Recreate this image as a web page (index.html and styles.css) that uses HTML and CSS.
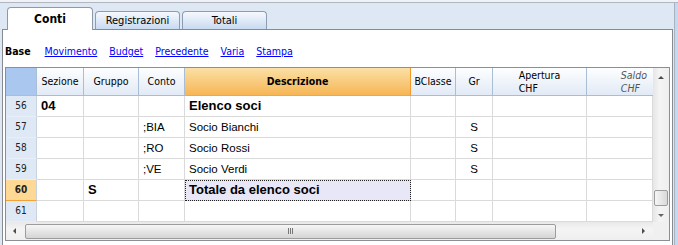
FILE: index.html
```html
<!DOCTYPE html>
<html lang="it">
<head>
    <meta charset="UTF-8">
    <title>Conti</title>
    <link rel="stylesheet" href="styles.css">
</head>
<body>
    <div class="app">
        <div class="main">
            <div class="tabs">
                <div class="tab tab--active">Conti</div>
                <div class="tab">Registrazioni</div>
                <div class="tab">Totali</div>
            </div>
            <section class="panel">
                <nav class="views">
                    <span class="views__current">Base</span>
                    <a href="#">Movimento</a>
                    <a href="#">Budget</a>
                    <a href="#">Precedente</a>
                    <a href="#">Varia</a>
                    <a href="#">Stampa</a>
                </nav>
                <div class="grid">
                    <div class="grid__main">
                        <div class="table">
                            <div class="row row--head">
                                <div class="cell cell--num"></div>
                                <div class="cell">Sezione</div>
                                <div class="cell">Gruppo</div>
                                <div class="cell">Conto</div>
                                <div class="cell cell--sel">Descrizione</div>
                                <div class="cell">BClasse</div>
                                <div class="cell">Gr</div>
                                <div class="cell">Apertura<br>CHF</div>
                                <div class="cell cell--calc">Saldo<br>CHF</div>
                            </div>
                            <div class="row">
                                <div class="cell cell--num">56</div>
                                <div class="cell cell--bold">04</div>
                                <div class="cell"></div>
                                <div class="cell"></div>
                                <div class="cell cell--bold">Elenco soci</div>
                                <div class="cell"></div>
                                <div class="cell"></div>
                                <div class="cell"></div>
                                <div class="cell"></div>
                            </div>
                            <div class="row">
                                <div class="cell cell--num">57</div>
                                <div class="cell"></div>
                                <div class="cell"></div>
                                <div class="cell">;BIA</div>
                                <div class="cell">Socio Bianchi</div>
                                <div class="cell"></div>
                                <div class="cell cell--center">S</div>
                                <div class="cell"></div>
                                <div class="cell"></div>
                            </div>
                            <div class="row">
                                <div class="cell cell--num">58</div>
                                <div class="cell"></div>
                                <div class="cell"></div>
                                <div class="cell">;RO</div>
                                <div class="cell">Socio Rossi</div>
                                <div class="cell"></div>
                                <div class="cell cell--center">S</div>
                                <div class="cell"></div>
                                <div class="cell"></div>
                            </div>
                            <div class="row">
                                <div class="cell cell--num">59</div>
                                <div class="cell"></div>
                                <div class="cell"></div>
                                <div class="cell">;VE</div>
                                <div class="cell">Socio Verdi</div>
                                <div class="cell"></div>
                                <div class="cell cell--center">S</div>
                                <div class="cell"></div>
                                <div class="cell"></div>
                            </div>
                            <div class="row row--current">
                                <div class="cell cell--num">60</div>
                                <div class="cell"></div>
                                <div class="cell cell--bold">S</div>
                                <div class="cell"></div>
                                <div class="cell cell--bold cell--focus">Totale da elenco soci</div>
                                <div class="cell"></div>
                                <div class="cell"></div>
                                <div class="cell"></div>
                                <div class="cell"></div>
                            </div>
                            <div class="row">
                                <div class="cell cell--num">61</div>
                                <div class="cell"></div>
                                <div class="cell"></div>
                                <div class="cell"></div>
                                <div class="cell"></div>
                                <div class="cell"></div>
                                <div class="cell"></div>
                                <div class="cell"></div>
                                <div class="cell"></div>
                            </div>
                        </div>
                        <div class="vscroll">
                            <span class="arrow arrow--up"></span>
                            <span class="vscroll__thumb"></span>
                            <span class="arrow arrow--down"></span>
                        </div>
                    </div>
                    <div class="hscroll">
                        <span class="arrow arrow--left"></span>
                        <span class="hscroll__thumb"><span class="grip"></span></span>
                        <span class="arrow arrow--right"></span>
                        <span class="corner"></span>
                    </div>
                </div>
            </section>
        </div>
        <div class="edge"></div>
    </div>
</body>
</html>
```

FILE: styles.css
```css
* { margin: 0; padding: 0; box-sizing: border-box; }
body {
    background: #eef3f9;
    font-family: "Liberation Sans", Arial, sans-serif;
    color: #000;
    overflow: hidden;
}
.app {
    display: flex;
    height: 243px;
    margin-top: 2px;
    border-top: 1px solid #b3b7bd;
    background: #dde8f4;
}
.main{
    width: 674px;
}
.edge{
    flex: 1;
    border-left: 1px solid #a9b3c0;
    background: #c4d8f1;
}

/* tabs */
.tabs{
    display: flex;
    align-items: flex-end;
    height: 27px;
    margin-bottom: -1px;
    padding-left: 7px;
    position: relative;
    z-index: 1;
}
.tab{
    width: 85px;
    height: 18px;
    margin-left: 2px;
    margin-bottom: 1px;
    padding-top: 2px;
    border: 1px solid #8e9cb1;
    border-bottom: none;
    border-radius: 4px 4px 0 0;
    background: linear-gradient(#f6f9fd, #c8daf1);
    font-family: "DejaVu Sans Condensed", "Liberation Sans", sans-serif;
    font-size: 11px;
    line-height: 14px;
    text-align: center;
}
.tab--active{
    width: 86px;
    height: 23px;
    margin-left: 0;
    margin-bottom: 0;
    padding-top: 4px;
    border-color: #8d99aa;
    background: #fff;
    font-weight: bold;
    font-size: 12px;
}

/* panel */
.panel{
    width: 671px;
    height: 216px;
    margin-left: 2px;
    border: 1px solid #878b90;
    border-bottom: none;
    background: #fff;
}
.views{
    display: flex;
    align-items: center;
    gap: 12px;
    height: 16px;
    margin: 13px 0 8px;
    padding-left: 2px;
    font-family: "DejaVu Sans Condensed", "Liberation Sans", sans-serif;
    font-size: 10.5px;
}
.views a{
    color: #0000ff;
    text-decoration: underline;
}
.views__current{
    font-weight: bold;
    margin-right: 2px;
}

/* grid */
.grid{
    margin: 0 2px;
    border: 1px solid #8b8f94;
}
.grid__main{
    display: flex;
}
.table{
    width: 647px;
}
.row{
    display: grid;
    grid-template-columns: 31px 47px 55px 46px 226px 45px 37px 94px 66px;
    height: 21px;
}
.cell{
    border-right: 1px solid #dadada;
    border-bottom: 1px solid #dadada;
    padding: 0 4px;
    font-size: 11.5px;
    line-height: 20px;
    white-space: nowrap;
    overflow: hidden;
}
.cell--bold{
    font-weight: bold;
    font-size: 13px;
}
.cell--center{
    text-align: center;
}
.cell--num{
    background: #dfe9f6;
    border-bottom-color: #e8eef7;
    border-right-color: #c9d3df;
    padding: 0;
    text-align: center;
    font-family: "DejaVu Sans Condensed", "Liberation Sans", sans-serif;
    font-size: 10px;
    color: #222;
}
.cell--focus{
    background: #e7e7f7;
    outline: 1px dotted #222;
    outline-offset: -1px;
}
.row--current .cell--num{
    background: #fdd995;
    border-bottom: 1px solid #f3a236;
    font-weight: bold;
}

.row--head{
    height: 28px;
}
.row--head .cell{
    display: flex;
    flex-direction: column;
    justify-content: center;
    align-items: center;
    padding: 0 3px;
    border-right-color: #a9bdd5;
    border-bottom-color: #a9bdd5;
    background: linear-gradient(#fdfeff, #e2eaf6);
    font-family: "DejaVu Sans Condensed", "Liberation Sans", sans-serif;
    font-size: 10.5px;
    line-height: 13px;
}
.row--head .cell--num{
    background: #aac8ef;
}
.row--head .cell--sel{
    background: linear-gradient(#fbe0a6, #f6b655);
    border-right-color: #f19a2c;
    border-bottom-color: #f0a844;
    font-weight: bold;
}
.row--head .cell--calc{
    align-items: flex-end;
    padding-right: 6px;
    font-style: italic;
    color: #555;
    border-right: none;
}

/* scrollbars */
.vscroll{
    width: 16px;
    display: flex;
    flex-direction: column;
    align-items: center;
    padding: 8px 0 5px;
    background: linear-gradient(90deg, #e6e6e6, #f4f4f4 40%, #efefef);
}
.vscroll__thumb{
    width: 14px;
    height: 16px;
    margin-top: auto;
    margin-bottom: 8px;
    border: 1px solid #9c9c9c;
    border-radius: 2px;
    background: linear-gradient(90deg, #f5f5f5, #d9d9d9);
}
.arrow{
    width: 0;
    height: 0;
    border: 3px solid transparent;
}
.arrow--up{
    border-top: none;
    border-bottom-color: #4d4d4d;
}
.arrow--down{
    border-bottom: none;
    border-top-color: #666;
}
.hscroll{
    display: flex;
    align-items: center;
    height: 18px;
    background: linear-gradient(#e9e9e9, #f4f4f4 40%, #efefef);
}
.arrow--left{
    margin-left: 7px;
    border-left: none;
    border-right-color: #4d4d4d;
}
.arrow--right{
    margin-left: auto;
    margin-right: 8px;
    border-right: none;
    border-left-color: #4d4d4d;
}
.hscroll__thumb{
    display: flex;
    align-items: center;
    justify-content: center;
    width: 531px;
    height: 15px;
    margin-left: 9px;
    border: 1px solid #9c9c9c;
    border-radius: 2px;
    background: linear-gradient(#f6f6f6, #d5d5d5);
}
.grip{
    width: 5px;
    height: 6px;
    border-left: 1px solid #777;
    border-right: 1px solid #777;
    background: linear-gradient(90deg, transparent 40%, #777 40%, #777 60%, transparent 60%);
}
.corner{
    width: 16px;
    height: 18px;
    background: #f0f0f0;
}
```
